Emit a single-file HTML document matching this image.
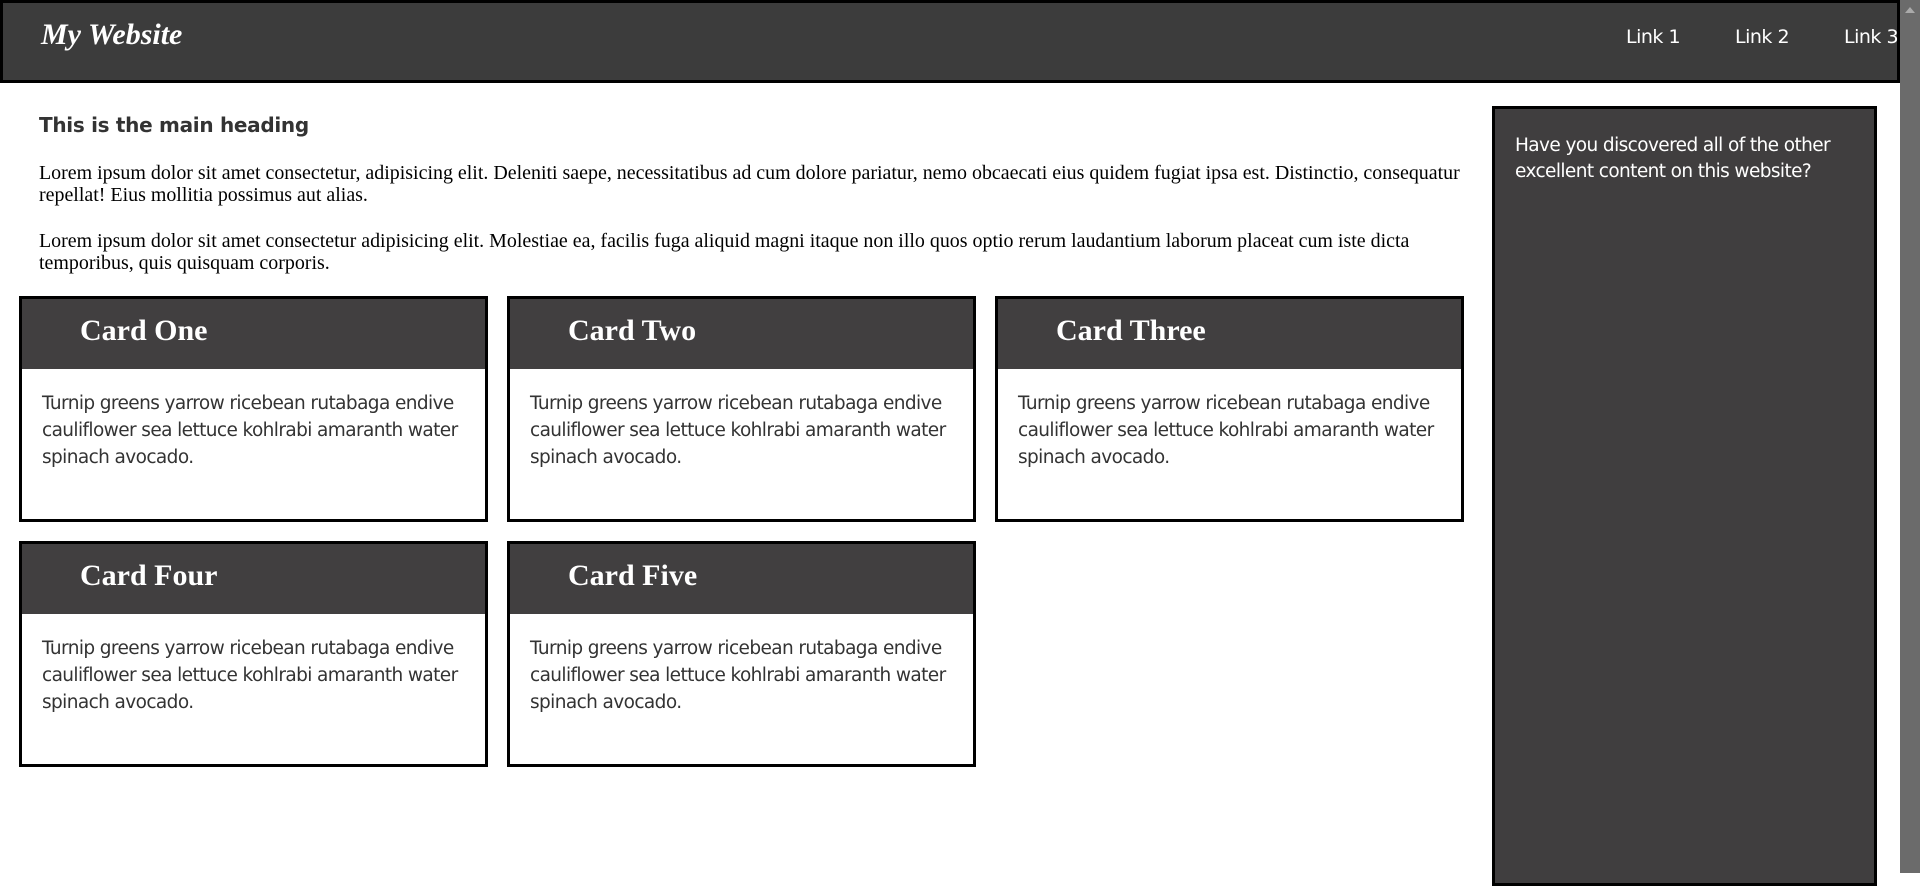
<!DOCTYPE html>
<html><head><meta charset="utf-8"><style>
*{box-sizing:border-box;margin:0;padding:0}
body{width:1920px;height:873px;overflow:hidden;background:#fff;position:relative;font-family:"Liberation Serif",serif}
.hdr{position:absolute;left:0;top:0;width:1900px;height:83px;background:#3c3c3c;border:3px solid #000}
.logo{position:absolute;left:41px;top:18px;font:italic bold 30px "Liberation Serif",serif;color:#fff}
.lnk{position:absolute;top:26px;font:19px "DejaVu Sans","Liberation Sans",sans-serif;color:#fff;letter-spacing:-0.5px}
.sb{position:absolute;left:1900px;top:0;width:20px;height:873px;background:#6b6b6b}
.sb:before{content:"";position:absolute;left:5px;top:7px;border:5px solid transparent;border-bottom:6px solid #aaa;border-top:0}
h1{position:absolute;left:39px;top:113px;font:bold 20px "DejaVu Sans","Liberation Sans",sans-serif;color:#333;letter-spacing:-0.3px}
p.t{position:absolute;left:39px;width:1432px;font-size:19.95px;line-height:22px;color:#000}
.card{position:absolute;width:469px;height:226px;border:3px solid #000;background:#fff}
.card .h{height:70px;background:#413f40;color:#fff;font:bold 30px "Liberation Serif",serif;padding:15px 0 0 58px}
.card .b{padding:21px 0 0 20px;font:18.5px "DejaVu Sans","Liberation Sans",sans-serif;color:#333;line-height:27px;letter-spacing:-0.6px;width:450px}
.side{position:absolute;left:1492px;top:106px;width:385px;height:780px;background:#403e3f;border:3px solid #000;color:#fff;font:18.5px "DejaVu Sans","Liberation Sans",sans-serif;line-height:26px;padding:24px 20px;letter-spacing:-0.6px}
</style></head><body>
<div class="hdr"></div>
<div class="logo">My Website</div>
<div class="lnk" style="left:1626px">Link 1</div>
<div class="lnk" style="left:1735px">Link 2</div>
<div class="lnk" style="left:1844px">Link 3</div>
<div class="sb"></div>
<h1>This is the main heading</h1>
<p class="t" style="top:162px">Lorem ipsum dolor sit amet consectetur, adipisicing elit. Deleniti saepe, necessitatibus ad cum dolore pariatur, nemo obcaecati eius quidem fugiat ipsa est. Distinctio, consequatur repellat! Eius mollitia possimus aut alias.</p>
<p class="t" style="top:230px">Lorem ipsum dolor sit amet consectetur adipisicing elit. Molestiae ea, facilis fuga aliquid magni itaque non illo quos optio rerum laudantium laborum placeat cum iste dicta temporibus, quis quisquam corporis.</p>
<div class="card" style="left:19px;top:296px"><div class="h">Card One</div><div class="b">Turnip greens yarrow ricebean rutabaga endive cauliflower sea lettuce kohlrabi amaranth water spinach avocado.</div></div>
<div class="card" style="left:507px;top:296px"><div class="h">Card Two</div><div class="b">Turnip greens yarrow ricebean rutabaga endive cauliflower sea lettuce kohlrabi amaranth water spinach avocado.</div></div>
<div class="card" style="left:995px;top:296px"><div class="h">Card Three</div><div class="b">Turnip greens yarrow ricebean rutabaga endive cauliflower sea lettuce kohlrabi amaranth water spinach avocado.</div></div>
<div class="card" style="left:19px;top:541px"><div class="h">Card Four</div><div class="b">Turnip greens yarrow ricebean rutabaga endive cauliflower sea lettuce kohlrabi amaranth water spinach avocado.</div></div>
<div class="card" style="left:507px;top:541px"><div class="h">Card Five</div><div class="b">Turnip greens yarrow ricebean rutabaga endive cauliflower sea lettuce kohlrabi amaranth water spinach avocado.</div></div>
<div class="side">Have you discovered all of the other excellent content on this website?</div>
</body></html>
